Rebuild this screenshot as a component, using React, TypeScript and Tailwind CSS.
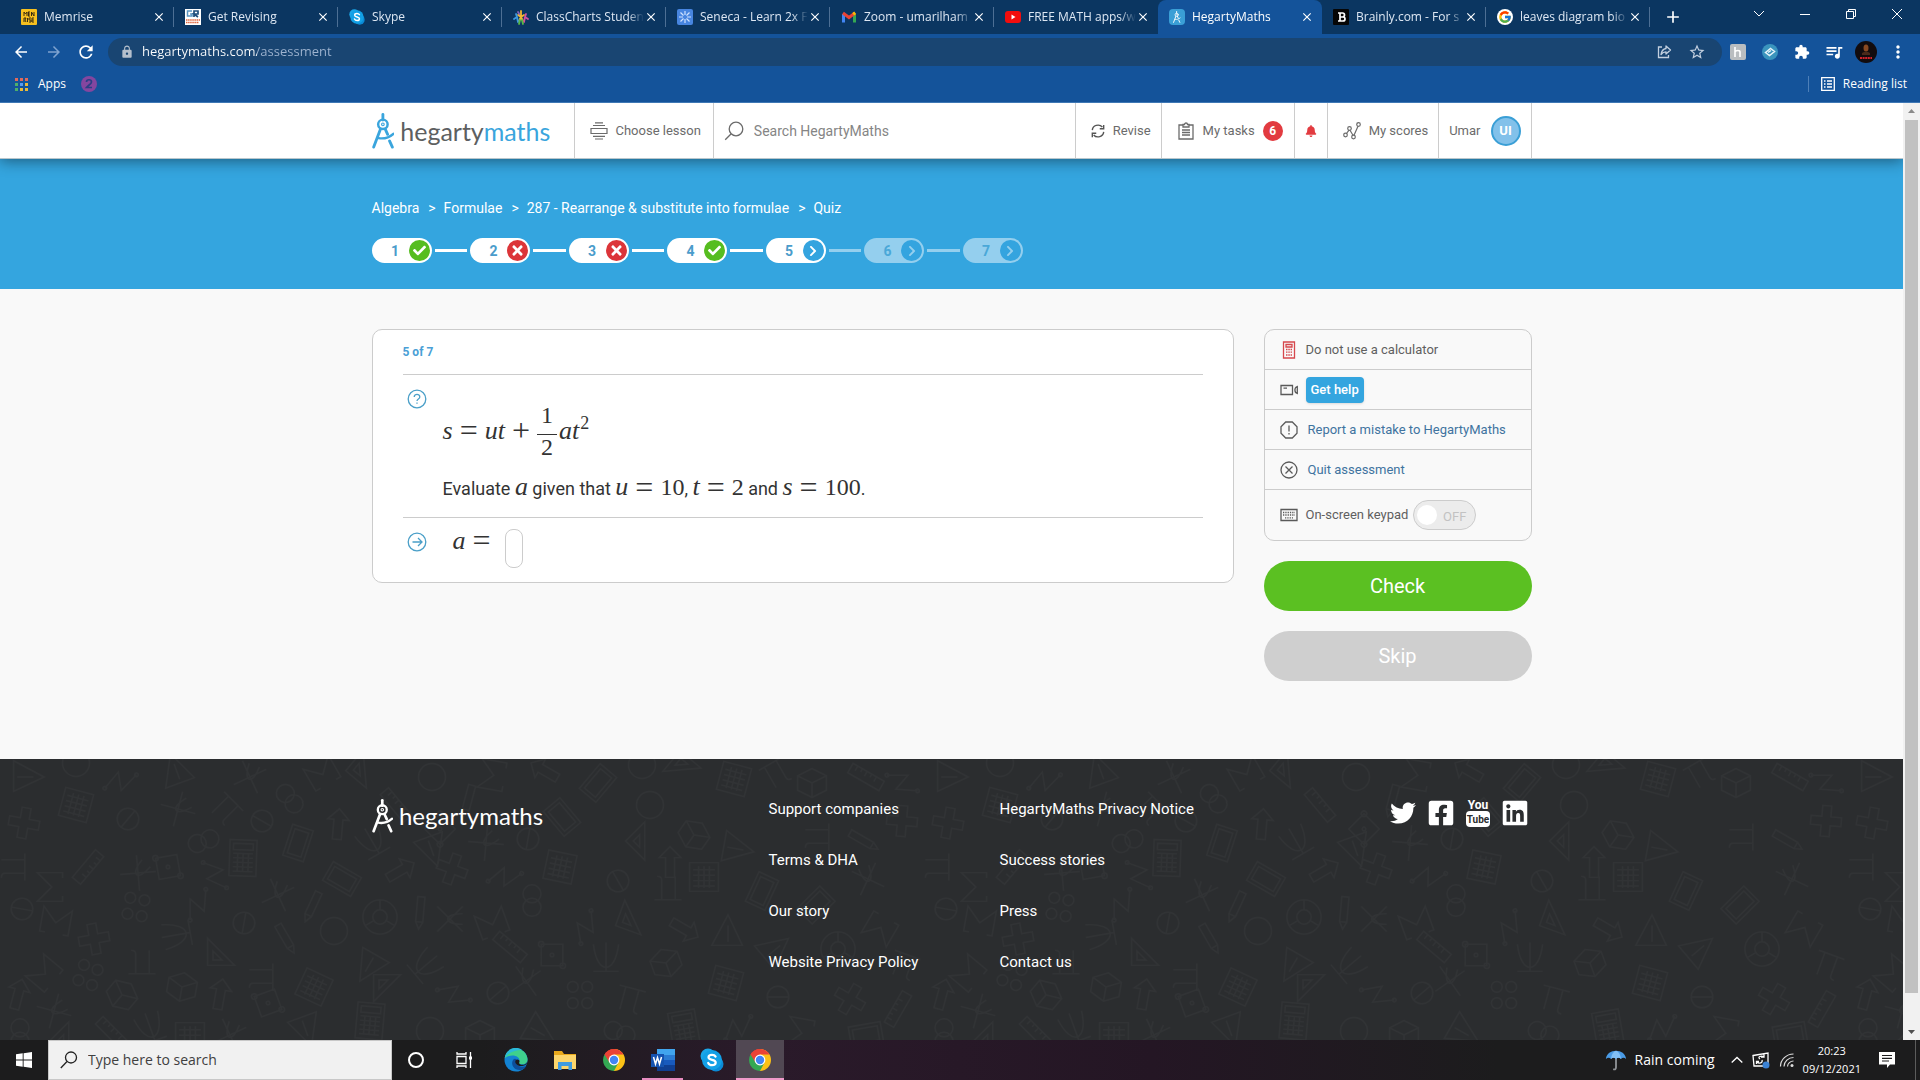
import type { ReactNode } from 'react';
import { FcGoogle } from 'react-icons/fc';
import { FaBell, FaCheck, FaChevronRight, FaFacebookSquare, FaLinkedin, FaTimes, FaTwitter } from 'react-icons/fa';
import {
    MdAdd,
    MdArrowBack,
    MdArrowForward,
    MdClose,
    MdExtension,
    MdLock,
    MdMoreVert,
    MdQueueMusic,
    MdRefresh,
    MdStarBorder,
} from 'react-icons/md';

type Tab = {
    title: string;
    icon: ReactNode;
    active?: boolean;
    divider?: boolean;
};

type Step = {
    number: number;
    state: 'right' | 'wrong' | 'current' | 'todo';
};

function SkypeIcon({ className }: { className: string }) {
    return (
        <svg viewBox="0 0 24 24" className={className}>
            <circle cx="8" cy="8" r="7.5" fill="#1aa6e8" />
            <circle cx="16" cy="16" r="7.5" fill="#0b8ad6" />
            <circle cx="12" cy="12" r="10" fill="#12a0e6" />
            <path
                d="M15.6 8.6C14.8 7.2 13.500 6.800 12 6.800c-2 0-3.500.9-3.500 2.500 0 3.500 7.200 1.700 7.200 5.200 0 1.700-1.600 2.700-3.600 2.700-1.700 0-3.200-.7-3.900-2.200"
                fill="none"
                stroke="#fff"
                strokeWidth="2.200"
                strokeLinecap="round"
            />
        </svg>
    );
}

function ChromeIcon() {
    return (
        <svg viewBox="0 0 24 24" className="size-6">
            <path d="M12 12 2.500 6.500A11 11 0 0 1 21.500 6.500Z" fill="#ea4335" />
            <path d="M12 12V1A11 11 0 0 1 12 23L7 14Z" fill="#fbc116" />
            <path d="M2.500 6.500A11 11 0 0 0 12 23L16.500 14.500 12 12Z" fill="#34a853" />
            <path d="M2.500 6.500A11 11 0 0 1 21.500 6.500H12L7.500 14.500Z" fill="#ea4335" />
            <circle cx="12" cy="12" r="5.400" fill="#fff" />
            <circle cx="12" cy="12" r="4.200" fill="#4285f4" />
        </svg>
    );
}

function CompassMark({ className, stroke }: { className: string; stroke: string }) {
    return (
        <svg viewBox="0 0 24 38" className={className} fill="none" stroke={stroke} strokeLinecap="round">
            <path d="M11.500 1.500v6" strokeWidth="3" />
            <circle cx="11.500" cy="12" r="5" strokeWidth="2.600" />
            <circle cx="11.500" cy="12" r="1.400" strokeWidth="1.200" />
            <path d="M9 17 1.800 36M14 17l2.500 5.500M18.500 29.500l3 6.500" strokeWidth="3" />
            <path d="M7 26.500c6 1 11-.5 15.500-4.500" strokeWidth="2.600" />
        </svg>
    );
}

const tabs: Tab[] = [
    {
        title: 'Memrise',
        divider: true,
        icon: (
            <svg viewBox="0 0 16 16" className="size-4">
                <rect width="16" height="16" rx="1" fill="#f7c01f" />
                <path
                    d="M3 7V3l1.500 2L6 3v4M7 3h2M7 5h2M7 7h2M7.500 3v4M10.500 7V3l2.500 4V3M3 13V9h2l-1 2 1 2M6.500 9v4M10 9H8v2h2v2H8M13 9h-2v4h2M11 11h2"
                    fill="none"
                    stroke="#3a2c10"
                />
            </svg>
        ),
    },
    {
        title: 'Get Revising',
        divider: true,
        icon: (
            <svg viewBox="0 0 16 16" className="size-4">
                <rect width="16" height="16" fill="#fff" />
                <path d="M7 2H2.500v5H7V5H5" fill="none" stroke="#5a96c4" strokeWidth="1.500" />
                <path d="M9 8V2h4v3H9l4 3" fill="none" stroke="#1f4e7c" strokeWidth="1.700" />
                <path d="M1 11h14M1 13.500h13" stroke="#e0643c" strokeWidth="1.600" strokeDasharray="1.500 .6" />
            </svg>
        ),
    },
    { title: 'Skype', divider: true, icon: <SkypeIcon className="size-4" /> },
    {
        title: 'ClassCharts Studen',
        divider: true,
        icon: (
            <svg viewBox="0 0 16 16" className="size-4" fill="none" strokeWidth="1.800" strokeLinecap="round">
                <path d="M8 8 5 3" stroke="#8a62b8" />
                <path d="M8 2v5M5 6l3 2 3-2M6 12l2-4 2 4" stroke="#f2b632" />
                <path d="m3 5 1 3-3 2M4 8l1 5" stroke="#3d9ae0" />
                <path d="m13 5-1 3 3 2M12 8l-1 5" stroke="#d44fa0" />
                <path d="m7 11-1 4M9 11l1 4" stroke="#58b947" />
            </svg>
        ),
    },
    {
        title: 'Seneca - Learn 2x F',
        divider: true,
        icon: (
            <svg viewBox="0 0 16 16" className="size-4">
                <rect width="16" height="16" rx="2" fill="#4785e0" />
                <path
                    d="M8 2v4M8 10v4M2 8h4M10 8h4M3.500 3.500l3 3M9.500 9.500l3 3M12.500 3.500l-3 3M6.500 9.500l-3 3"
                    stroke="#cfe2ff"
                    strokeWidth="1.200"
                />
            </svg>
        ),
    },
    {
        title: 'Zoom - umarilham',
        divider: true,
        icon: (
            <svg viewBox="0 0 16 16" className="size-4" fill="none" strokeWidth="3">
                <path d="M2.500 13.500V5" stroke="#4285f4" />
                <path d="M13.500 13.500V5" stroke="#34a853" />
                <path d="m2 4 6 4.500L14 4" stroke="#ea4335" />
                <path d="m12.200 5.300 2-1.500" stroke="#fbbc04" />
            </svg>
        ),
    },
    {
        title: 'FREE MATH apps/w',
        icon: (
            <svg viewBox="0 0 16 16" className="size-4">
                <rect y="2" width="16" height="12" rx="3" fill="#f20d0d" />
                <path d="m6.500 5.500 4 2.500-4 2.500Z" fill="#fff" />
            </svg>
        ),
    },
    {
        title: 'HegartyMaths',
        active: true,
        icon: (
            <span className="flex size-4 items-center justify-center rounded-sm bg-[#3a9fd6]">
                <CompassMark className="h-3" stroke="#fff" />
            </span>
        ),
    },
    {
        title: 'Brainly.com - For s',
        divider: true,
        icon: (
            <svg viewBox="0 0 16 16" className="size-4">
                <rect width="16" height="16" rx="1" fill="#060606" />
                <path d="M5 4h4.500a1.800 1.800 0 0 1 0 4H6.500h3.500a2 2 0 0 1 0 4H5M7 4v8" fill="none" stroke="#fff" strokeWidth="1.700" />
            </svg>
        ),
    },
    {
        title: 'leaves diagram bio',
        divider: true,
        icon: (
            <span className="flex size-4 items-center justify-center rounded-full bg-white">
                <FcGoogle className="size-[14px]" />
            </span>
        ),
    },
];

const steps: Step[] = [
    { number: 1, state: 'right' },
    { number: 2, state: 'wrong' },
    { number: 3, state: 'wrong' },
    { number: 4, state: 'right' },
    { number: 5, state: 'current' },
    { number: 6, state: 'todo' },
    { number: 7, state: 'todo' },
];

const footerLinks = [
    ['Support companies', 'Terms & DHA', 'Our story', 'Website Privacy Policy'],
    ['HegartyMaths Privacy Notice', 'Success stories', 'Press', 'Contact us'],
];

function TabStrip() {
    return (
        <div className="flex h-[34px] items-stretch bg-[#0b3661] pl-[10px] text-xs text-[#dde7f3]">
            {tabs.map((tab) => (
                <div
                    key={tab.title}
                    className={
                        tab.active
                            ? 'flex w-[164px] min-w-0 items-center rounded-t-lg bg-[#14539a] pr-2 pl-[11px] text-white'
                            : 'flex w-[164px] min-w-0 items-center pl-[11px]'
                    }
                >
                    <span className="shrink-0">{tab.icon}</span>
                    <span className="ml-[7px] min-w-0 flex-1 overflow-hidden mask-r-from-85% whitespace-nowrap">
                        {tab.title}
                    </span>
                    <button aria-label={`Close ${tab.title}`} className="shrink-0 text-white">
                        <MdClose className="size-[14px]" />
                    </button>
                    {!tab.active && (
                        <span className={tab.divider ? 'ml-[7px] h-5 w-px bg-[#4d6f94]' : 'ml-[7px] w-px'} />
                    )}
                </div>
            ))}
            <button aria-label="New tab" className="ml-[13px] text-white">
                <MdAdd className="size-5" />
            </button>
            <div className="ml-auto flex pb-[6px] text-white">
                <button aria-label="Search tabs" className="flex w-[46px] items-center justify-center">
                    <svg viewBox="0 0 12 12" className="size-3" fill="none" stroke="currentColor">
                        <path d="m1 3 5 5 5-5" />
                    </svg>
                </button>
                <button aria-label="Minimise" className="flex w-[46px] items-center justify-center">
                    <svg viewBox="0 0 12 12" className="size-3" stroke="currentColor">
                        <path d="M1 6.500h10" />
                    </svg>
                </button>
                <button aria-label="Restore" className="flex w-[46px] items-center justify-center">
                    <svg viewBox="0 0 12 12" className="size-3" fill="none" stroke="currentColor">
                        <path d="M1.500 3.500h7v7h-7ZM3.500 3.500v-2h7v7h-2" />
                    </svg>
                </button>
                <button aria-label="Close window" className="flex w-[46px] items-center justify-center">
                    <svg viewBox="0 0 12 12" className="size-3" stroke="currentColor">
                        <path d="m1 1 10 10M11 1 1 11" />
                    </svg>
                </button>
            </div>
        </div>
    );
}

function ToolbarButton({ label, children }: { label: string; children: ReactNode }) {
    return (
        <button aria-label={label} className="flex w-8 items-center justify-center">
            {children}
        </button>
    );
}

function Toolbar() {
    return (
        <div className="flex h-9 items-center pl-3 text-white">
            <button aria-label="Back">
                <MdArrowBack className="size-[18px]" />
            </button>
            <button aria-label="Forward" className="ml-[15px] text-[#7fa3d0]">
                <MdArrowForward className="size-[18px]" />
            </button>
            <button aria-label="Reload" className="ml-[13px]">
                <MdRefresh className="size-5" />
            </button>
            <div className="ml-3 flex h-7 flex-1 items-center rounded-full bg-[#194572] pr-4 pl-3">
                <MdLock className="size-[14px] text-[#b4bfcc]" />
                <input
                    aria-label="Address"
                    defaultValue="hegartymaths.com/assessment"
                    className="ml-2 min-w-0 flex-1 bg-[linear-gradient(90deg,#fff_115px,#9fb4d0_115px)] bg-clip-text text-[13px] text-transparent outline-none"
                />
                <button aria-label="Share">
                    <svg viewBox="0 0 16 16" className="size-4" fill="none" stroke="#c3d0e0" strokeWidth="1.300">
                        <path d="M6 3H2.500v10.500h10V11" />
                        <path d="M10 2v2.500C7 5 5.500 7 5 10.500c1.500-2 3-2.700 5-2.700V10l4.500-4Z" strokeLinejoin="round" />
                    </svg>
                </button>
                <button aria-label="Bookmark this page" className="ml-4">
                    <MdStarBorder className="size-[18px] text-[#c3d0e0]" />
                </button>
            </div>
            <div className="mr-[6px] flex items-center">
                <ToolbarButton label="Honey">
                    <svg viewBox="0 0 16 16" className="size-4">
                        <rect width="16" height="16" rx="2" fill="#b9bdc0" />
                        <path d="M5 13V3M5 8c1-2 5-2 5 0v5" fill="none" stroke="#fff" strokeWidth="1.600" />
                    </svg>
                </ToolbarButton>
                <ToolbarButton label="Extension">
                    <svg viewBox="0 0 16 16" className="size-4">
                        <circle cx="8" cy="8" r="8" fill="#3a94bd" />
                        <path d="m3.500 8.500 5-4 4 3-5 4ZM6 8.500l3-2" fill="none" stroke="#e6f4fa" strokeWidth="1.500" />
                    </svg>
                </ToolbarButton>
                <ToolbarButton label="Extensions">
                    <MdExtension className="size-4" />
                </ToolbarButton>
                <ToolbarButton label="Media">
                    <MdQueueMusic className="size-5" />
                </ToolbarButton>
                <ToolbarButton label="Profile">
                    <svg viewBox="0 0 22 22" className="size-[22px]">
                        <circle cx="11" cy="11" r="11" fill="#120c0e" />
                        <ellipse cx="11" cy="7" rx="2.500" ry="3.500" fill="#8a4a22" />
                        <path d="M7 12q4-3 8 0v2H7Z" fill="#4a2a1a" />
                        <path d="M5 17h12" stroke="#d3222a" strokeWidth="2" strokeDasharray="2 .6" />
                    </svg>
                </ToolbarButton>
                <ToolbarButton label="Menu">
                    <MdMoreVert className="size-5" />
                </ToolbarButton>
            </div>
        </div>
    );
}

function Bookmarks() {
    const dots = ['#e06a5c', '#e06a5c', '#e06a5c', '#4fae6a', '#5b9bf0', '#e9b93a', '#4fae6a', '#e9b93a', '#e9b93a'];

    return (
        <div className="flex h-[33px] items-center border-b border-[#3f78b5] pr-[13px] pb-1 pl-[15px] text-xs text-white">
            <a href="#apps" className="flex items-center">
                <svg viewBox="0 0 13 13" className="size-[13px]">
                    {dots.map((fill, i) => (
                        <rect key={i} x={(i % 3) * 5} y={Math.floor(i / 3) * 5} width="3" height="3" fill={fill} />
                    ))}
                </svg>
                <span className="ml-[10px]">Apps</span>
            </a>
            <a href="#2" aria-label="Bookmark" className="ml-[15px]">
                <svg viewBox="0 0 16 16" className="size-4">
                    <circle cx="8" cy="8" r="8" fill="#84469f" />
                    <path d="M5.500 6C5.500 3 10.500 3 10.500 6c0 2-3 3-5 5.500h5.500" fill="none" stroke="#2a3f86" strokeWidth="1.700" />
                </svg>
            </a>
            <button className="ml-auto flex h-4 items-center border-l border-[#4d7fb8] pl-3">
                <svg viewBox="0 0 14 14" className="size-[14px]" fill="none" stroke="#fff" strokeWidth="1.300">
                    <path d="M.7.7h12.600v12.600H.7ZM3 4h1.500M3 7h1.500M3 10h1.500M6 4h5M6 7h5M6 10h5" />
                </svg>
                <span className="ml-2">Reading list</span>
            </button>
        </div>
    );
}

function SiteHeader() {
    return (
        <header className="relative z-10 border-b border-[#b9c6cc] bg-white text-[13px] text-[#6b6b6b] shadow-[0_2px_14px_rgba(0,0,0,0.45)]">
            <div className="mx-auto flex h-[55px] w-[1160px] items-stretch">
                <a href="#home" className="flex w-[202px] shrink-0 items-center">
                    <CompassMark className="h-[36px]" stroke="#3aa5dd" />
                    <span className="ml-[6px] font-[Lato] text-[25px] leading-9 text-[#5d5f61]">
                        hegarty<span className="text-[#3aa5dd]">maths</span>
                    </span>
                </a>
                <a href="#lessons" className="flex shrink-0 items-center border-l border-[#ccc] pr-3 pl-[15px]">
                    <svg viewBox="0 0 18 18" className="size-[18px]" fill="none" stroke="#6b6b6b" strokeWidth="1.200">
                        <path d="M5 .8h8M3 3.500h12M1 6.500h16v5H1ZM3 14.300h12M5 17h8" />
                    </svg>
                    <span className="ml-2">Choose lesson</span>
                </a>
                <label className="flex min-w-0 flex-1 items-center border-l border-[#ccc] pl-[10px]">
                    <svg viewBox="0 0 20 20" className="size-5" fill="none" stroke="#6b6b6b" strokeWidth="1.300">
                        <circle cx="12" cy="8" r="6.800" />
                        <path d="m7.200 12.800-6 6" />
                    </svg>
                    <input
                        aria-label="Search"
                        placeholder="Search HegartyMaths"
                        className="ml-[10px] min-w-0 flex-1 text-sm outline-none placeholder:text-[#858585]"
                    />
                </label>
                <nav className="flex shrink-0 items-stretch">
                    <a href="#revise" className="flex items-center border-l border-[#ccc] pr-[10px] pl-[15px]">
                        <svg viewBox="0 0 16 16" className="size-[14px]" fill="none" stroke="#555" strokeWidth="1.600">
                            <path d="M1.500 7A6.500 6 0 0 1 13 3.500M14.500 1v4.500H10M14.500 9A6.500 6 0 0 1 3 12.500M1.500 15v-4.500H6" />
                        </svg>
                        <span className="ml-2">Revise</span>
                    </a>
                    <a href="#tasks" className="flex items-center border-l border-[#ccc] pr-[11px] pl-4">
                        <svg viewBox="0 0 16 18" className="h-[18px]" fill="none" stroke="#6b6b6b" strokeWidth="1.300">
                            <path d="M5 3H1v14h14V3h-4M5 2.500h1.500a1.500 1.500 0 0 1 3 0H11v2.500H5ZM4 8h8M4 10.500h8M4 13h8" />
                        </svg>
                        <span className="ml-[9px]">My tasks</span>
                        <span className="ml-2 flex size-5 items-center justify-center rounded-full bg-[#e23b40] text-xs font-bold text-white">
                            6
                        </span>
                    </a>
                    <button
                        aria-label="Notifications"
                        className="flex w-[33px] items-center justify-center border-l border-[#ccc] text-[#e23b40]"
                    >
                        <FaBell className="size-3" />
                    </button>
                    <a href="#scores" className="flex items-center border-l border-[#ccc] pr-[10px] pl-[15px]">
                        <svg viewBox="0 0 18 18" className="size-[18px]" fill="none" stroke="#6b6b6b" strokeWidth="1.200">
                            <circle cx="2.500" cy="13" r="1.800" />
                            <circle cx="6.500" cy="6.500" r="1.800" />
                            <circle cx="10.500" cy="15" r="1.800" />
                            <circle cx="15.500" cy="2.500" r="1.800" />
                            <path d="M3.500 11.500 6 8.200M7 8.200l3 5M11 13.200l4-9" />
                        </svg>
                        <span className="ml-2">My scores</span>
                    </a>
                    <button className="flex items-center border-x border-[#ccc] px-[10px]">
                        Umar
                        <span className="ml-[10px] flex size-[30px] items-center justify-center rounded-full border-2 border-[#3a9fd6] bg-[#82c1ea] font-bold text-white">
                            UI
                        </span>
                    </button>
                </nav>
            </div>
        </header>
    );
}

function StepPill({ number, state }: Step) {
    return (
        <a
            href={`#q${number}`}
            className={
                state === 'todo'
                    ? 'flex h-[25px] w-[60px] items-center rounded-full bg-[#94cfee] text-sm font-bold text-[#4aa8d8]'
                    : 'flex h-[25px] w-[60px] items-center rounded-full bg-white text-sm font-bold text-[#4a9ccb]'
            }
        >
            <span className="ml-[10px] w-[27px] text-center">{number}</span>
            {state === 'right' && (
                <span className="flex size-[21px] items-center justify-center rounded-full bg-[#56bd20] text-white">
                    <FaCheck className="size-[13px]" />
                </span>
            )}
            {state === 'wrong' && (
                <span className="flex size-[21px] items-center justify-center rounded-full bg-[#dc3539] text-white">
                    <FaTimes className="size-[15px]" />
                </span>
            )}
            {(state === 'current' || state === 'todo') && (
                <span
                    className={
                        state === 'current'
                            ? 'flex size-[21px] items-center justify-center rounded-full bg-[#34a4df] text-white'
                            : 'flex size-[21px] items-center justify-center rounded-full bg-[#34a4df] text-[#94cfee]'
                    }
                >
                    <FaChevronRight className="size-3" />
                </span>
            )}
        </a>
    );
}

function QuizBanner() {
    const crumbs = ['Algebra', 'Formulae', '287 - Rearrange & substitute into formulae', 'Quiz'];

    return (
        <div className="bg-[#34a5df]">
            <div className="mx-auto h-[130px] w-[1160px] pt-[39px] text-white">
                <nav className="flex text-sm leading-5">
                    {crumbs.map((crumb, i) => (
                        <span key={crumb} className="flex">
                            {i > 0 && <span className="mr-2 ml-[9px]">&gt;</span>}
                            <a href="#crumb">{crumb}</a>
                        </span>
                    ))}
                </nav>
                <div className="mt-5 flex w-[651px] items-center">
                    {steps.map((step) => (
                        <div key={step.number} className={step.number > 1 ? 'flex flex-1 items-center' : 'flex'}>
                            {step.number > 1 && (
                                <span
                                    className={
                                        step.state === 'todo'
                                            ? 'mx-[3px] h-[3px] flex-1 bg-[#94cfee]'
                                            : 'mx-[3px] h-[3px] flex-1 bg-white'
                                    }
                                />
                            )}
                            <StepPill {...step} />
                        </div>
                    ))}
                </div>
            </div>
        </div>
    );
}

function Var({ children }: { children: ReactNode }) {
    return <i className="font-['Liberation_Serif',serif] text-[26px] leading-[22px]">{children}</i>;
}

function Num({ children }: { children: ReactNode }) {
    return <span className="font-['Liberation_Serif',serif] text-2xl leading-6">{children}</span>;
}

function Op({ children }: { children: ReactNode }) {
    return (
        <span className="mx-[7px] self-center pb-[2px] font-['Liberation_Serif',serif] text-[32px] leading-[22px]">
            {children}
        </span>
    );
}

function QuestionCard() {
    return (
        <section className="flex-1 rounded-[10px] border border-[#ccc] bg-white px-[30px] text-[#333]">
            <h1 className="flex h-11 items-center text-xs font-bold text-[#4a9fd6]">5 of 7</h1>
            <div className="flex border-t border-[#ccc] pb-4">
                <svg viewBox="0 0 20 20" className="mt-[14px] ml-1 size-5" fill="none" stroke="#4a9fc8" strokeWidth="1.300">
                    <circle cx="10" cy="10" r="8.800" />
                    <path d="M7.200 8c0-3.500 5.600-3.500 5.600 0 0 2-2.800 2-2.800 4M10 13.500v1.300" />
                </svg>
                <div className="ml-4">
                    <div className="mt-7 flex items-center">
                        <Var>s</Var>
                        <Op>=</Op>
                        <Var>ut</Var>
                        <Op>+</Op>
                        <span className="mr-[2px] flex flex-col items-center">
                            <span className="border-b border-[#333] px-1 pb-1">
                                <Num>1</Num>
                            </span>
                            <Num>2</Num>
                        </span>
                        <Var>at</Var>
                        <span className="mb-4 ml-px font-['Liberation_Serif',serif] text-lg leading-none">2</span>
                    </div>
                    <p className="mt-4 flex items-baseline text-lg leading-6 whitespace-pre">
                        Evaluate <Var>a</Var> given that <Var>u</Var>
                        <Op>=</Op>
                        <Num>10</Num>, <Var>t</Var>
                        <Op>=</Op>
                        <Num>2</Num> and <Var>s</Var>
                        <Op>=</Op>
                        <Num>100</Num>.
                    </p>
                </div>
            </div>
            <div className="flex border-t border-[#ccc] pt-[11px] pb-[14px]">
                <svg viewBox="0 0 20 20" className="mt-[3px] ml-1 size-5" fill="none" stroke="#4a9fc8" strokeWidth="1.300">
                    <circle cx="10" cy="10" r="8.800" />
                    <path d="M5.500 10h9M11 6l4 4-4 4" />
                </svg>
                <label htmlFor="answer" className="ml-[26px] flex h-6 items-center">
                    <Var>a</Var>
                    <Op>=</Op>
                </label>
                <input id="answer" className="ml-[7px] h-[39px] w-[18px] rounded-lg border border-[#ccc] outline-none" />
            </div>
        </section>
    );
}

function SideRow({ icon, children }: { icon: ReactNode; children: ReactNode }) {
    return (
        <li className="flex h-10 items-center border-b border-[#ccc] pl-[15px]">
            {icon}
            {children}
        </li>
    );
}

function SidePanel() {
    const icon = 'size-[18px] shrink-0 mr-2';

    return (
        <aside className="w-[268px] shrink-0">
            <ul className="rounded-[10px] border border-[#ccc] text-[13px] text-[#5f5f5f]">
                <SideRow
                    icon={
                        <svg viewBox="0 0 18 18" className={icon} fill="none" stroke="#d6474c" strokeWidth="1.300">
                            <path d="M3.500 1h11v16h-11ZM6 3.500h6v2.500H6Z" />
                            <path d="M6 8.500h6M6 11.200h6M6 14h6" strokeDasharray="1.500 .8" />
                        </svg>
                    }
                >
                    <span>Do not use a calculator</span>
                </SideRow>
                <SideRow
                    icon={
                        <svg viewBox="0 0 18 18" className={icon} fill="none" stroke="#5a5a5a" strokeWidth="1.300">
                            <path d="M1 4.500h11.500v9H1ZM3.500 7.200H7M17.300 5.500v7c-3.200-1-3.200-6 0-7Z" />
                        </svg>
                    }
                >
                    <button className="h-[26px] rounded bg-[#34a5df] px-[5px] font-medium text-white shadow-sm">
                        Get help
                    </button>
                </SideRow>
                <SideRow
                    icon={
                        <svg viewBox="0 0 18 18" className={icon} fill="none" stroke="#5a5a5a" strokeWidth="1.300">
                            <path d="M5.700 1h6.600L17 5.700v6.600L12.300 17H5.700L1 12.300V5.700ZM9 4.500v6M9 12v1.500" />
                        </svg>
                    }
                >
                    <a href="#report" className="ml-[2px] text-[#40739f]">
                        Report a mistake to HegartyMaths
                    </a>
                </SideRow>
                <SideRow
                    icon={
                        <svg viewBox="0 0 18 18" className={icon} fill="none" stroke="#5a5a5a" strokeWidth="1.300">
                            <circle cx="9" cy="9" r="8" />
                            <path d="m5.500 5.500 7 7M12.500 5.500l-7 7" />
                        </svg>
                    }
                >
                    <a href="#quit" className="ml-[2px] text-[#40739f]">
                        Quit assessment
                    </a>
                </SideRow>
                <li className="flex h-[50px] items-center pl-[15px]">
                    <svg viewBox="0 0 18 18" className={icon} fill="none" stroke="#5a5a5a" strokeWidth="1.300">
                        <path d="M1 3.500h16v11H1Z" />
                        <path d="M3 6.500h12M3 9h12M5 11.800h8" strokeDasharray="1.300 1" />
                    </svg>
                    <label htmlFor="keypad">On-screen keypad</label>
                    <label className="relative ml-[5px] block h-[30px] w-[63px]">
                        <input
                            id="keypad"
                            type="checkbox"
                            role="switch"
                            className="block size-full appearance-none rounded-full border border-[#ccc] bg-[#ececec]"
                        />
                        <span className="absolute top-[5px] left-1 size-5 rounded-full bg-white" />
                        <span className="absolute top-[7px] right-[10px] leading-5 text-[#c2c2c2]">OFF</span>
                    </label>
                </li>
            </ul>
            <button className="mt-5 block h-[50px] w-full rounded-full bg-[#5bc022] text-xl text-white">Check</button>
            <button className="mt-5 block h-[50px] w-full rounded-full bg-[#cfcfcf] text-xl text-white">Skip</button>
        </aside>
    );
}

// Line drawings on a 40 x 40 box, centred on 0,0
const doodles: Record<string, string> = {
    triangle: 'M-16 16V-18L18 0ZM-12 0H6',
    square: 'M-16 16V-14L14 16ZM-10 10V0L0 10Z',
    calc: 'M-15-20H15V20H-15ZM-11-16H11V-9H-11ZM-11-5H11M-11 0H11M-11 5H11M-11 10H11M-11 15H11M-6-5V15M0-5V15M6-5V15',
    grid: 'M-16-16H16V16H-16ZM-12-8H12M-12-2H12M-12 4H12M-12 10H12M-6-12V12M0-12V12M6-12V12',
    plus: 'M-5-17H5V-5H17V5H5V17H-5V5H-17V-5H-5Z',
    circle: 'M-15 0a15 15 0 1 0 30 0a15 15 0 1 0-30 0',
    theta: 'M-12 0a12 12 0 1 0 24 0a12 12 0 1 0-24 0M-12 0H12',
    venn: 'M-18 0a10 10 0 1 0 20 0a10 10 0 1 0-20 0M-3 0a10 10 0 1 0 20 0a10 10 0 1 0-20 0',
    dots: 'M-14-9a6 6 0 1 0 12 0a6 6 0 1 0-12 0M2-9a6 6 0 1 0 12 0a6 6 0 1 0-12 0M-14 9a6 6 0 1 0 12 0a6 6 0 1 0-12 0M2 9a6 6 0 1 0 12 0a6 6 0 1 0-12 0',
    sigma: 'M14-10V-16H-14L2 0L-14 16H14V10',
    box: 'M-16-8L0-16L16-8V8L0 16L-16 8ZM-16-8L0 0L16-8M0 0V16',
    plane: 'M-12-18H12V18H-12ZM-8-14H8V14H-8Z',
    arrow: 'M-5 16V-6H-12L0-18L12-6H5V16Z',
    axes: 'M-14-14L14 14M14-14L-14 14M-6-14C-6 8 6 8 6-14',
    curve: 'M-14-14C-10 20 10 20 14-14M0-16V16M-14 16H14',
    zig: 'M-16 12L-8-10L2 8L12-14M-18 12a2 2 0 1 0 4 0a2 2 0 1 0-4 0M10-14a2 2 0 1 0 4 0a2 2 0 1 0-4 0',
    pi: 'M-15-12H15M-8-12V14M7-12V10q0 4 5 4',
    ruler: 'M-20-6H20V6H-20ZM-14-6V0M-8-6V-2M-2-6V0M4-6V-2M10-6V0',
    frame: 'M-12-12H12V12H-12ZM-15-12a3 3 0 1 0 6 0a3 3 0 1 0-6 0M9 12a3 3 0 1 0 6 0a3 3 0 1 0-6 0M-2 0a2 2 0 1 0 4 0a2 2 0 1 0-4 0',
    donut: 'M-19 0a19 19 0 1 0 38 0a19 19 0 1 0-38 0M-8 0a8 8 0 1 0 16 0a8 8 0 1 0-16 0M0-19V-8M-17 10L-7 4M17 10L7 4',
    pencil: 'M-4-18H4V10L0 18L-4 10ZM-4 10H4',
};

const placed: [string, number, number, number][] = [
    ['triangle', 28, 18, 0], ['circle', 76, 4, 0], ['zig', 122, 24, 20], ['triangle', 176, 10, 250], ['axes', 250, 18, 20],
    ['sigma', 322, 14, 60], ['square', 366, 10, 40], ['circle', 432, 18, 0], ['sigma', 492, 16, 10], ['arrow', 545, 12, 300],
    ['plane', 598, 24, 40], ['circle', 642, 6, 0], ['square', 682, 12, 130], ['grid', 734, 20, 15], ['pi', 776, 14, 330],
    ['box', 812, 24, 0], ['ruler', 866, 18, 30], ['zig', 902, 26, 70],
    ['grid', 76, 46, 15], ['plus', 24, 64, 10], ['theta', 128, 60, 130], ['axes', 178, 50, 60], ['pi', 226, 50, 45],
    ['theta', 262, 62, 30], ['venn', 290, 40, 50], ['plane', 298, 84, 18], ['arrow', 338, 66, 5], ['curve', 372, 82, 330],
    ['ruler', 396, 46, 50], ['frame', 440, 70, 45], ['pencil', 468, 42, 15], ['triangle', 432, 92, 70], ['axes', 486, 84, 50],
    ['plane', 562, 58, 320], ['theta', 528, 80, 100], ['circle', 650, 46, 0], ['box', 694, 76, 35], ['triangle', 738, 90, 10],
    ['pi', 818, 78, 90], ['pencil', 864, 82, 300], ['plus', 902, 62, 5],
    ['ruler', 88, 108, 130], ['sigma', 50, 128, 0], ['pi', 14, 108, 90], ['axes', 138, 114, 40], ['frame', 168, 108, 350],
    ['venn', 204, 82, 340], ['calc', 243, 99, 2], ['zig', 214, 118, 90], ['plane', 342, 120, 120], ['axes', 278, 136, 20],
    ['arrow', 400, 112, 60], ['plus', 452, 110, 20], ['grid', 560, 108, 12], ['zig', 506, 120, 30], ['theta', 618, 122, 60],
    ['square', 646, 82, 45], ['arrow', 670, 104, 0], ['grid', 704, 118, 0], ['pi', 668, 130, 180], ['plane', 762, 132, 25],
    ['axes', 868, 120, 340], ['dots', 136, 148, 10], ['zig', 200, 146, 340], ['theta', 244, 164, 100], ['pencil', 312, 148, 25],
    ['circle', 334, 172, 0], ['donut', 380, 158, 0], ['pencil', 420, 154, 5], ['axes', 450, 160, 90], ['sigma', 492, 164, 70],
    ['venn', 532, 142, 90], ['zig', 588, 168, 330], ['square', 634, 158, 20], ['arrow', 684, 170, 120], ['triangle', 728, 172, 270],
    ['plane', 816, 146, 45], ['sigma', 880, 170, 300], ['theta', 22, 150, 10], ['sigma', 56, 162, 100], ['plus', 94, 180, 80],
    ['curve', 176, 176, 260], ['square', 222, 192, 0], ['pencil', 286, 180, 330], ['triangle', 368, 208, 120], ['curve', 426, 206, 50],
    ['ruler', 510, 188, 40], ['frame', 552, 196, 0], ['curve', 606, 198, 0], ['box', 666, 204, 340], ['triangle', 776, 190, 320],
    ['donut', 838, 190, 0], ['pi', 904, 206, 20], ['sigma', 44, 214, 40], ['dots', 88, 216, 20], ['pi', 142, 204, 180],
    ['box', 182, 228, 10], ['box', 122, 236, 40], ['arrow', 220, 236, 10], ['pi', 262, 218, 90], ['grid', 314, 228, 25],
    ['frame', 268, 244, 340], ['square', 388, 230, 90], ['zig', 454, 238, 60], ['theta', 498, 234, 140], ['axes', 526, 222, 10],
    ['dots', 580, 236, 0], ['pi', 630, 240, 15], ['grid', 726, 224, 15], ['theta', 778, 238, 0], ['plus', 850, 240, 30],
    ['ruler', 898, 250, 300], ['arrow', 18, 236, 15], ['axes', 54, 252, 60], ['square', 70, 282, 45], ['ruler', 112, 274, 45],
    ['curve', 150, 268, 340], ['grid', 190, 278, 0], ['axes', 230, 276, 20], ['triangle', 306, 272, 70], ['calc', 370, 262, 5],
    ['circle', 430, 272, 0], ['box', 480, 276, 0], ['triangle', 540, 274, 30], ['venn', 620, 274, 20], ['calc', 684, 270, 350],
    ['zig', 740, 270, 0], ['sigma', 800, 274, 10], ['plane', 866, 276, 80], ['venn', 20, 276, 90],
];

function FooterPattern() {
    return (
        <svg className="absolute inset-0 size-full" fill="none" stroke="#313335" strokeWidth="1.600">
            <pattern id="doodles" width="924" height="300" patternUnits="userSpaceOnUse">
                {placed.map(([name, x, y, angle], i) => (
                    <path key={i} d={doodles[name]} transform={`translate(${x} ${y}) rotate(${angle}) scale(.9)`} />
                ))}
            </pattern>
            <rect width="100%" height="100%" fill="url(#doodles)" stroke="none" />
        </svg>
    );
}

function SiteFooter() {
    return (
        <footer className="relative flex-1 bg-[#2b2d2f] text-white">
            <FooterPattern />
            <div className="relative mx-auto flex w-[1160px] items-start pt-10">
                <a href="#home" className="flex w-[397px] items-center">
                    <CompassMark className="h-[34px]" stroke="#fff" />
                    <span className="ml-[6px] font-[Lato] text-2xl leading-8">hegartymaths</span>
                </a>
                {footerLinks.map((links, i) => (
                    <ul key={i} className={i === 0 ? 'w-[231px]' : 'flex-1'}>
                        {links.map((link) => (
                            <li key={link} className="mb-[31px] text-[15px] leading-5">
                                <a href="#footer">{link}</a>
                            </li>
                        ))}
                    </ul>
                ))}
                <div className="mr-[3px] flex items-center gap-[11px]">
                    <a href="#twitter" aria-label="Twitter">
                        <FaTwitter className="size-[26px]" />
                    </a>
                    <a href="#facebook" aria-label="Facebook">
                        <FaFacebookSquare className="size-7" />
                    </a>
                    <a href="#youtube" aria-label="YouTube">
                        <svg viewBox="0 0 24 28" className="h-7">
                            <text x="12" y="10" textAnchor="middle" fontSize="12" fontWeight="700" fill="#fff">
                                You
                            </text>
                            <rect y="12" width="24" height="16" rx="4" fill="#fff" />
                            <text x="12" y="24" textAnchor="middle" fontSize="10" fontWeight="700" fill="#2b2d2f">
                                Tube
                            </text>
                        </svg>
                    </a>
                    <a href="#linkedin" aria-label="LinkedIn">
                        <FaLinkedin className="size-7" />
                    </a>
                </div>
            </div>
        </footer>
    );
}

function Scrollbar() {
    return (
        <div className="flex w-[17px] shrink-0 flex-col items-center bg-[#f1f1f1]">
            <svg viewBox="0 0 17 17" className="size-[17px]">
                <path d="m5 10 3.500-4 3.500 4Z" fill="#8a8a8a" />
            </svg>
            <div className="w-[13px] flex-1 bg-[#c1c1c1]" />
            <svg viewBox="0 0 17 17" className="mt-[30px] size-[17px]">
                <path d="m5 7 3.500 4 3.500-4Z" fill="#505050" />
            </svg>
        </div>
    );
}

function Taskbar() {
    return (
        <div className="flex h-10 shrink-0 items-stretch bg-[linear-gradient(90deg,#1c1c1d_25%,#2a1a2a_40%,#241624_60%,#1c1c1d_78%)] text-white">
            <button aria-label="Start" className="flex w-12 items-center justify-center">
                <svg viewBox="0 0 16 16" className="size-4" fill="#fff">
                    <path d="M0 2.200 6.700 1.300v6.200H0ZM7.600 1.200 16 0v7.500H7.600ZM0 8.500h6.700v6.200L0 13.800ZM7.600 8.500H16V16l-8.400-1.200Z" />
                </svg>
            </button>
            <label className="flex w-[344px] items-center border border-[#c8c8c8] bg-[#f1f1f1] pl-[11px] text-[#333]">
                <svg viewBox="0 0 18 18" className="size-[18px]" fill="none" stroke="#222" strokeWidth="1.300">
                    <circle cx="11" cy="6.500" r="5.500" />
                    <path d="M7 10.500.800 17" />
                </svg>
                <input
                    aria-label="Search Windows"
                    placeholder="Type here to search"
                    className="ml-[10px] min-w-0 flex-1 text-sm outline-none placeholder:text-[#404040]"
                />
            </label>
            <button aria-label="Cortana" className="flex w-12 items-center justify-center">
                <span className="size-4 rounded-full border-2 border-white" />
            </button>
            <button aria-label="Task view" className="flex w-12 items-center justify-center">
                <svg viewBox="0 0 18 18" className="size-[18px]" fill="none" stroke="#fff" strokeWidth="1.300">
                    <path d="M2 5.500h9v7H2ZM2 1v2h9V1M2 17v-2h9v2M15.500 1v16" />
                    <path d="M14 5.500h3v3h-3Z" fill="#fff" stroke="none" />
                </svg>
            </button>
            <button aria-label="Edge" className="ml-[3px] flex w-[49px] items-center justify-center">
                <svg viewBox="0 0 24 24" className="size-6">
                    <circle cx="12" cy="12" r="11.500" fill="#1382d2" />
                    <path d="M.8 10C2-2 22-3 23.500 11c.3 5-4 6-7.500 5-2-.7-1-1.500-.5-3C16 8 8 5 .8 10Z" fill="#3fd08c" />
                    <path d="M.8 10C2-1 14-2 18 2 10 2 4 5 .8 10Z" fill="#2bb9d9" />
                    <path d="M9 12c-3 5 2 11 8 10 3-.5 5-3 5.500-4.500-3 2-8 1.500-10-1.500-1-1.500-1-3 0-4.500-1-1-2.500-.8-3.500.5Z" fill="#0d4f9a" />
                    <path d="M11.500 12.500c1-1.800 4-1.300 4 .8-.2 1.500-1 2 .5 2.900 2.500 1.200 5.500.5 7-2 0 3-5 5-9 3.200-2.500-1.300-3.300-3.300-2.500-4.900Z" fill="#1d1b1e" />
                </svg>
            </button>
            <button aria-label="File Explorer" className="flex w-[49px] items-center justify-center">
                <svg viewBox="0 0 24 24" className="size-6">
                    <path d="M1 3h8l2 3h12v15H1Z" fill="#e9a91c" />
                    <path d="M1 7h22v14H1Z" fill="#fcd66c" />
                    <path d="M5 22v-8h14v8h-3.500v-4h-7v4Z" fill="#3f9be0" />
                </svg>
            </button>
            <button aria-label="Chrome" className="flex w-[49px] items-center justify-center">
                <ChromeIcon />
            </button>
            <button aria-label="Word" className="mx-1 flex w-[41px] items-center justify-center border-b-2 border-[#e78cc0] pt-[2px]">
                <svg viewBox="0 0 24 24" className="size-6">
                    <path d="M6 1h18v6H6Z" fill="#41a5ee" />
                    <path d="M6 7h18v5H6Z" fill="#2b7cd3" />
                    <path d="M6 12h18v5H6Z" fill="#185abd" />
                    <path d="M6 17h18v6H6Z" fill="#103f91" />
                    <path d="M0 6h13v13H0Z" fill="#1553b0" />
                    <path d="m2.500 9 2 7 2-6.500 2 6.500 2-7" fill="none" stroke="#fff" strokeWidth="1.500" />
                </svg>
            </button>
            <button aria-label="Skype" className="flex w-[49px] items-center justify-center">
                <SkypeIcon className="size-6" />
            </button>
            <button aria-label="Chrome, running" className="flex w-12 items-center justify-center border-b-2 border-[#f09aca] bg-[#514853] pt-[2px]">
                <ChromeIcon />
            </button>
            <div className="ml-auto flex items-center">
                <svg viewBox="0 0 24 24" className="size-[22px]">
                    <path d="M12 10v10q0 3-3 2" fill="none" stroke="#8f9296" strokeWidth="2" />
                    <path d="M1 11C2-1 22-1 23 11c-2-2-4-2-5.500 0-2-2-3.500-2-5.500 0-2-2-3.500-2-5.500 0C5 9 3 9 1 11Z" fill="#4a9be6" />
                    <path d="M6.500 11C7 6 9 3 12 2c3 1 5 4 5.500 9-2-2-3.500-2-5.500 0-2-2-3.500-2-5.500 0Z" fill="#82bff5" />
                </svg>
                <span className="ml-2 text-sm">Rain coming</span>
                <svg viewBox="0 0 12 12" className="ml-4 size-3" fill="none" stroke="#fff" strokeWidth="1.300">
                    <path d="m.7 8.500 5.300-5 5.300 5" />
                </svg>
                <svg viewBox="0 0 18 18" className="ml-[9px] size-[18px]" fill="none" stroke="#fff" strokeWidth="1.300">
                    <path d="M1 4.500 16 2v13H2ZM12 6c-3-2-7 0-4 2M5 11c2 2 6 1 5-2M12 3.500V6H9M4.500 13v-2.500H7" />
                    <circle cx="14" cy="14" r="3.500" fill="#3b82d4" stroke="none" />
                </svg>
                <svg viewBox="0 0 16 16" className="ml-[9px] size-4" fill="none" stroke="#ddd" strokeWidth="1.200">
                    <path d="M1.500 14.500c0-7 6-12.500 13-12.500M5 14.500C5 9.500 9.500 5.500 14.500 5.500M8.500 14.500c0-3 3-5.500 6-5.500" />
                    <circle cx="13" cy="13.500" r="1.500" fill="#ddd" stroke="none" />
                </svg>
                <div className="ml-2 text-center text-[11px] leading-[18px]">
                    <div>20:23</div>
                    <div>09/12/2021</div>
                </div>
                <svg viewBox="0 0 16 16" className="ml-[18px] size-4">
                    <path d="M0 0h16v12.500h-5L8 16v-3.500H0Z" fill="#fff" />
                    <path d="M3 3.500h10M3 6.300h10M3 9h7" stroke="#1c1c1d" strokeWidth="1.200" />
                </svg>
                <span className="mr-1 ml-5 h-10 w-px bg-[#5c5c5c]" />
            </div>
        </div>
    );
}

export default function App() {
    return (
        <div className="flex h-screen flex-col overflow-hidden font-[Roboto,sans-serif]">
            <div className="shrink-0 bg-[#14539a] font-['Open_Sans',sans-serif]">
                <TabStrip />
                <Toolbar />
                <Bookmarks />
            </div>
            <div className="flex min-h-0 flex-1">
                <div className="flex min-w-0 flex-1 flex-col overflow-hidden bg-[#f9f9f9]">
                    <SiteHeader />
                    <QuizBanner />
                    <main className="mx-auto flex w-[1160px] items-start gap-[30px] pt-10 pb-[78px]">
                        <QuestionCard />
                        <SidePanel />
                    </main>
                    <SiteFooter />
                </div>
                <Scrollbar />
            </div>
            <div className="shrink-0 font-['Open_Sans',sans-serif]">
                <Taskbar />
            </div>
        </div>
    );
}
